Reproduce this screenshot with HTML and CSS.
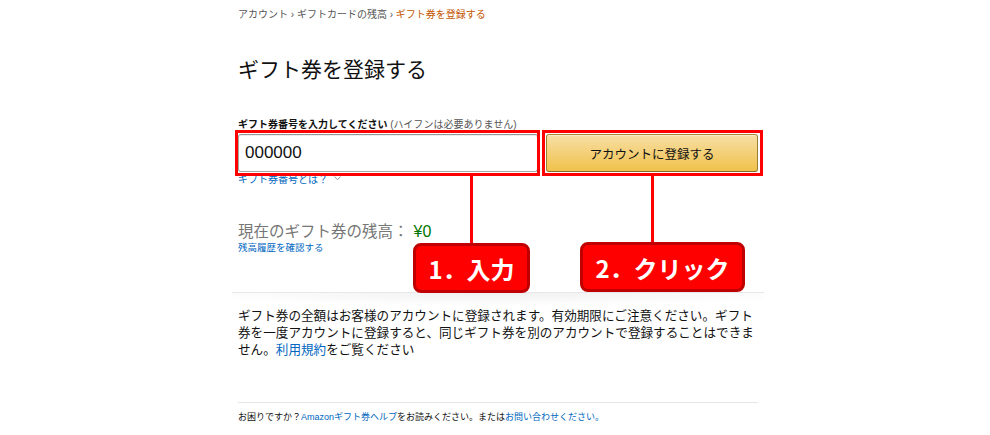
FILE: index.html
```html
<!DOCTYPE html>
<html lang="ja">

<head>
    <meta charset="UTF-8">
    <meta name="viewport" content="width=device-width, initial-scale=1.0">
    <title>ギフト券を登録する</title>
    <link rel="stylesheet" href="styles.css">
</head>

<body>
    <div class="page">

        <div class="breadcrumb">
            <a href="#">アカウント</a>
            <span class="sep">›</span>
            <a href="#">ギフトカードの残高</a>
            <span class="sep">›</span>
            <span class="current">ギフト券を登録する</span>
        </div>

        <h1 class="page-title">ギフト券を登録する</h1>

        <form class="redeem-form">
            <label for="claim-code" class="input-label">ギフト券番号を入力してください <span class="hint">(ハイフンは必要ありません)</span></label>
            <div class="redeem-row">
                <input type="text" id="claim-code" value="000000">
                <button type="button" class="btn-submit">アカウントに登録する</button>
            </div>
            <a href="#" class="what-link">ギフト券番号とは？
                <svg class="chev" width="7" height="5" viewBox="0 0 7 5"><polyline points="0.5,0.5 3.5,3.8 6.5,0.5" fill="none" stroke="#999" stroke-width="1"/></svg>
            </a>
        </form>

        <div class="balance">
            <span class="balance-label">現在のギフト券の残高：</span><span class="balance-amount">¥0</span>
        </div>
        <a href="#" class="history-link">残高履歴を確認する</a>

        <div class="shadow-divider"></div>

        <p class="notice">ギフト券の全額はお客様のアカウントに登録されます。有効期限にご注意ください。ギフト券を一度アカウントに登録すると、同じギフト券を別のアカウントで登録することはできません。<a href="#">利用規約</a>をご覧ください</p>

        <hr class="line-break">

        <p class="help">お困りですか？<a href="#">Amazonギフト券ヘルプ</a>をお読みください。または<a href="#">お問い合わせください。</a></p>

        <!-- annotations drawn over the page -->
        <div class="mark mark-input"></div>
        <div class="mark mark-button"></div>
        <div class="leader leader-1"></div>
        <div class="leader leader-2"></div>
        <div class="callout callout-1">1．入力</div>
        <div class="callout callout-2">2．クリック</div>
    </div>
</body>

</html>
```

FILE: styles.css
```css
* {
  margin: 0;
  padding: 0;
  box-sizing: border-box;
}

body {
  background: #fff;
  color: #111;
  font-family: "Liberation Sans", "Noto Sans CJK JP", sans-serif;
}

a {
  color: #0066c0;
  text-decoration: none;
}

.page {
  position: relative;
  width: 520px;
  margin-left: 238px;
  padding-top: 8px;
}

.breadcrumb {
  font-size: 10px;
  line-height: 14px;
  color: #555;
}

.breadcrumb a {
  color: #555;
}

.breadcrumb .current {
  color: #c45500;
}

.page-title {
  margin-top: 34px;
  font-size: 21px;
  line-height: 28px;
  font-weight: 400;
  color: #111;
}

.redeem-form {
  margin-top: 34px;
}

.input-label {
  display: block;
  font-size: 10px;
  line-height: 14px;
  font-weight: 700;
}

.input-label .hint {
  font-weight: 400;
  color: #555;
}

.redeem-row {
  display: grid;
  grid-template-columns: 300px 212px;
  gap: 8px;
  margin-top: 2px;
}

.redeem-row input {
  height: 38px;
  padding: 0 6px;
  font-family: "Liberation Sans", sans-serif;
  font-size: 17px;
  color: #111;
  border: 1px solid #a6a6a6;
  border-top-color: #949494;
  border-radius: 3px;
  box-shadow: 0 1px 0 rgba(0, 0, 0, .07) inset;
  outline: none;
}

.btn-submit {
  height: 38px;
  font-family: "Liberation Sans", "Noto Sans CJK JP", sans-serif;
  font-size: 12.5px;
  color: #111;
  background: linear-gradient(to bottom, #f7dfa5, #f0c14b);
  border: 1px solid;
  border-color: #a88734 #9c7e31 #846a29;
  border-radius: 3px;
  box-shadow: 0 1px 0 rgba(255, 255, 255, .4) inset;
  cursor: pointer;
}

.what-link {
  display: block;
  margin-top: 1px;
  font-size: 10px;
  line-height: 14px;
}

.what-link .chev {
  margin-left: 3px;
  vertical-align: 2px;
}

.balance {
  margin-top: 35px;
  font-size: 15.5px;
  line-height: 20px;
}

.balance-label {
  color: #767676;
}

.balance-amount {
  margin-left: 5px;
  font-size: 16px;
  color: #007600;
}

.history-link {
  display: block;
  font-size: 9.5px;
  line-height: 12px;
}

.shadow-divider {
  height: 14px;
  margin: 38px -6px 0;
  border-top: 1px solid #e8e8e8;
  background: radial-gradient(ellipse 60% 100% at 50% 0, rgba(0, 0, 0, .06), rgba(0, 0, 0, 0) 100%);
}

.notice {
  margin-top: 2px;
  font-size: 12.6px;
  line-height: 17px;
  color: #111;
}

.line-break {
  height: 0;
  margin-top: 43px;
  border: 0;
  border-top: 1px solid #e7e7e7;
}

.help {
  margin-top: 8px;
  font-size: 9px;
  line-height: 13px;
  color: #111;
}

/* annotations */
.mark {
  position: absolute;
  top: 130px;
  height: 46px;
  border: 3px solid #ff0000;
}

.mark-input {
  left: -3px;
  width: 305px;
}

.mark-button {
  left: 304px;
  width: 221px;
}

.leader {
  position: absolute;
  top: 176px;
  width: 3px;
  background: #ff0000;
}

.leader-1 {
  left: 232px;
  height: 67px;
}

.leader-2 {
  left: 413px;
  height: 66px;
}

.callout {
  position: absolute;
  height: 50px;
  display: flex;
  align-items: center;
  justify-content: center;
  background: #ff0000;
  border: 3px solid #c00000;
  border-radius: 8px;
  color: #fff;
  font-family: "Noto Sans CJK JP", sans-serif;
  font-size: 24px;
  font-weight: 700;
}

.callout-1 {
  left: 175px;
  top: 243px;
  width: 117px;
}

.callout-2 {
  left: 342px;
  top: 242px;
  width: 165px;
}
```
